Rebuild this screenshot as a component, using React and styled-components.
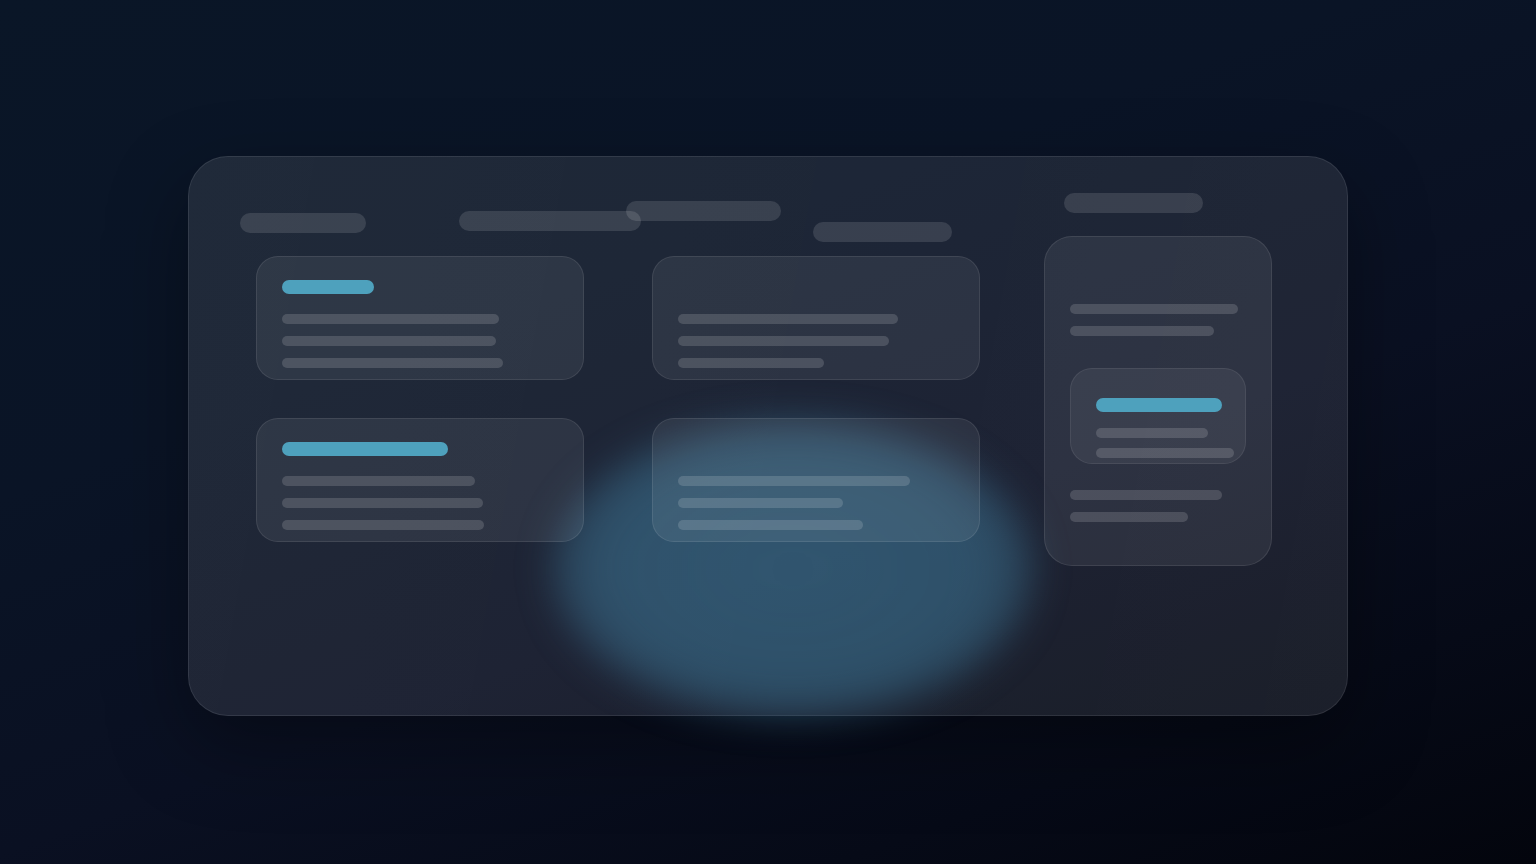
import styled, { createGlobalStyle } from "styled-components";

const GlobalStyle = createGlobalStyle`
  html, body {
    margin: 0;
    padding: 0;
  }
  body {
    font-family: "Inter", "Liberation Sans", sans-serif;
    background: #070d1a;
  }
`;

const Page = styled.div`
  width: 100vw;
  height: 100vh;
  display: flex;
  align-items: center;
  justify-content: center;
  background: linear-gradient(
    160deg,
    #0a1627 0%,
    #0a1426 35%,
    #0a1022 60%,
    #060a17 82%,
    #03050d 100%
  );
  overflow: hidden;
`;

const Panel = styled.div`
  position: relative;
  box-sizing: border-box;
  width: 1160px;
  height: 560px;
  margin-top: 8px;
  padding: 36px 75px 0 51px;
  display: flex;
  align-items: flex-start;
  justify-content: space-between;
  border-radius: 40px;
  background: linear-gradient(
    100deg,
    rgba(255, 255, 255, 0.09) 0%,
    rgba(255, 255, 255, 0.08) 60%,
    rgba(255, 255, 255, 0.09) 100%
  );
  border: 1px solid rgba(255, 255, 255, 0.09);
  box-shadow: 0 30px 80px rgba(0, 0, 0, 0.35);
`;

const Glow = styled.div`
  position: absolute;
  left: 364px;
  top: 262px;
  width: 480px;
  height: 300px;
  border-radius: 50%;
  background: radial-gradient(
    ellipse at center,
    rgba(62, 120, 152, 0.6) 0%,
    rgba(62, 120, 152, 0.55) 55%,
    rgba(62, 120, 152, 0) 100%
  );
  filter: blur(18px);
  pointer-events: none;
  z-index: 0;
`;

const Board = styled.div`
  position: relative;
  z-index: 1;
  margin-top: 8px;
  display: flex;
  flex-direction: column;
`;

const HeaderRow = styled.div`
  display: flex;
  align-items: flex-start;
  height: 41px;
`;

const Pill = styled.div`
  flex: none;
  width: ${(p) => p.$w}px;
  height: 20px;
  margin-left: ${(p) => p.$ml || 0}px;
  margin-top: ${(p) => p.$mt || 0}px;
  border-radius: 10px;
  background: rgba(255, 255, 255, 0.12);
`;

const CardGrid = styled.div`
  margin-top: 14px;
  padding-left: 16px;
  display: grid;
  grid-template-columns: 328px 328px;
  column-gap: 68px;
  row-gap: 38px;
`;

const Card = styled.div`
  box-sizing: border-box;
  height: 124px;
  padding: 23px 25px 0;
  border-radius: 22px;
  background: rgba(255, 255, 255, 0.07);
  border: 1px solid rgba(255, 255, 255, 0.09);
  display: flex;
  flex-direction: column;
`;

const Accent = styled.div`
  width: ${(p) => p.$w}px;
  height: 14px;
  border-radius: 7px;
  background: ${(p) => (p.$hidden ? "transparent" : "#4ea1bd")};
  margin-bottom: 20px;
`;

const Lines = styled.div`
  display: flex;
  flex-direction: column;
  gap: ${(p) => p.$gap || 12}px;
  margin-top: ${(p) => p.$mt || 0}px;
`;

const Line = styled.div`
  width: ${(p) => p.$w}px;
  height: 10px;
  border-radius: 5px;
  background: rgba(255, 255, 255, 0.15);
`;

const SideColumn = styled.div`
  position: relative;
  z-index: 1;
  display: flex;
  flex-direction: column;
`;

const SideCard = styled.div`
  box-sizing: border-box;
  width: 228px;
  height: 330px;
  margin-top: 23px;
  padding: 67px 0 0 25px;
  border-radius: 28px;
  background: rgba(255, 255, 255, 0.07);
  border: 1px solid rgba(255, 255, 255, 0.09);
  display: flex;
  flex-direction: column;
`;

const InnerCard = styled.div`
  box-sizing: border-box;
  width: 176px;
  height: 96px;
  margin-top: 32px;
  padding: 29px 0 0 25px;
  border-radius: 22px;
  background: rgba(255, 255, 255, 0.06);
  border: 1px solid rgba(255, 255, 255, 0.08);
  display: flex;
  flex-direction: column;
`;

const InnerAccent = styled(Accent)`
  margin-bottom: 16px;
`;

const cards = [
  { accent: 92, lines: [217, 214, 221] },
  { accent: 92, hidden: true, lines: [220, 211, 146] },
  { accent: 166, lines: [193, 201, 202] },
  { accent: 166, hidden: true, lines: [232, 165, 185] },
];

export default function App() {
  return (
    <>
      <GlobalStyle />
      <Page>
        <Panel>
          <Glow />
          <Board>
            <HeaderRow>
              <Pill $w={126} $mt={12} />
              <Pill $w={182} $ml={93} $mt={10} />
              <Pill $w={155} $ml={-15} />
              <Pill $w={139} $ml={32} $mt={21} />
            </HeaderRow>
            <CardGrid>
              {cards.map((c, i) => (
                <Card key={i}>
                  <Accent $w={c.accent} $hidden={c.hidden} />
                  <Lines>
                    {c.lines.map((w, j) => (
                      <Line key={j} $w={w} />
                    ))}
                  </Lines>
                </Card>
              ))}
            </CardGrid>
          </Board>
          <SideColumn>
            <Pill $w={139} $ml={20} />
            <SideCard>
              <Lines>
                <Line $w={168} />
                <Line $w={144} />
              </Lines>
              <InnerCard>
                <InnerAccent $w={126} />
                <Lines $gap={10}>
                  <Line $w={112} />
                  <Line $w={138} />
                </Lines>
              </InnerCard>
              <Lines $mt={26}>
                <Line $w={152} />
                <Line $w={118} />
              </Lines>
            </SideCard>
          </SideColumn>
        </Panel>
      </Page>
    </>
  );
}
